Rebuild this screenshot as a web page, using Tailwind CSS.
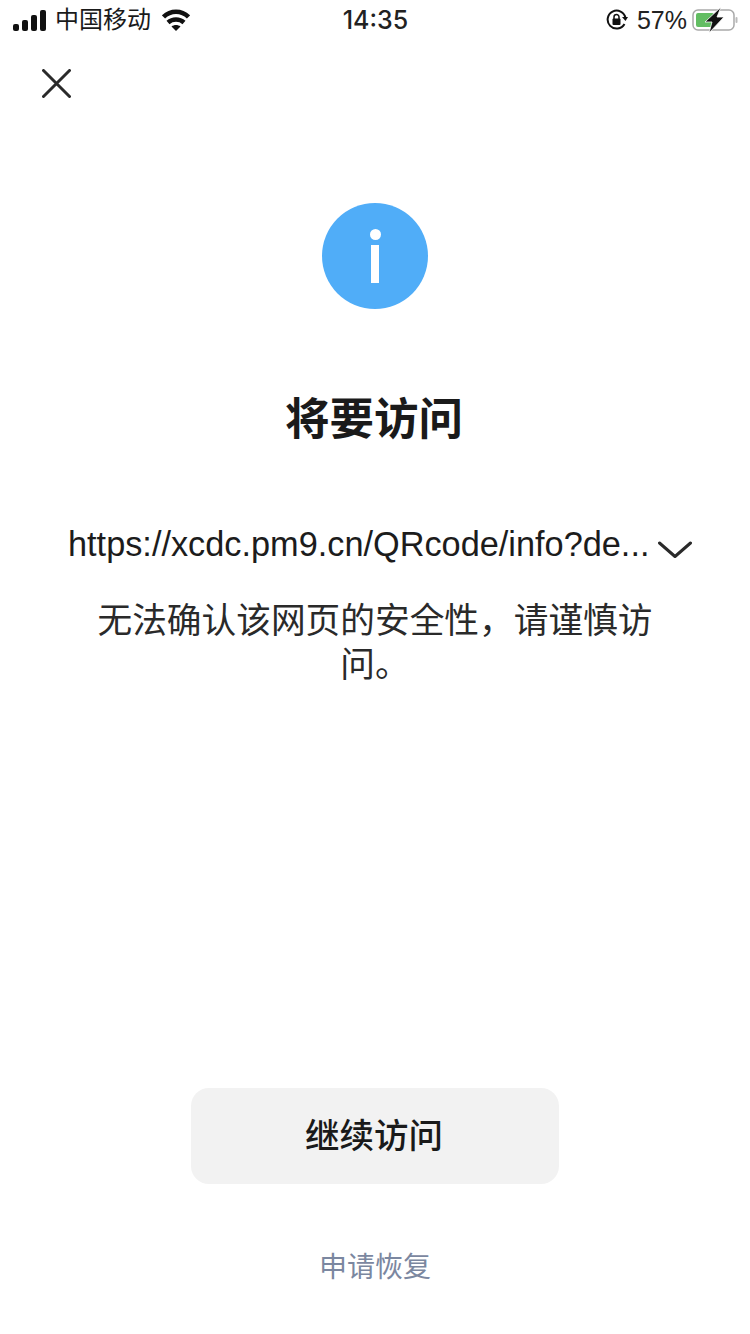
<!doctype html>
<html lang="zh-CN"><head><meta charset="utf-8">
<script src="https://cdn.jsdelivr.net/npm/@tailwindcss/browser@4"></script>
</head>
<body class="bg-white">
<div class="w-[750px] h-[1334px] flex flex-col items-center overflow-hidden text-[#1a1a1a] font-['Liberation_Sans','Noto_Sans_CJK_SC',sans-serif]">
  <div class="w-full h-[40px] shrink-0 grid grid-cols-3 items-center pl-[13px] pr-[12px]">
    <div class="flex items-center">
      <svg width="34" height="21" viewBox="0 0 34 21" fill="#111"><rect x="0" y="14" width="6" height="7" rx="2"/><rect x="9" y="10" width="6" height="11" rx="2"/><rect x="18" y="5" width="6" height="16" rx="2"/><rect x="27" y="0" width="6" height="21" rx="2"/></svg>
      <span class="ml-[8px] text-[24px] leading-none">中国移动</span>
      <svg class="ml-[11px]" width="28" height="22" viewBox="0 0 28 22" fill="none" stroke="#111" stroke-width="4.500"><path d="M1.500 8 C8.500 1 19.500 1 26.500 8"/><path d="M6 13.500 C10.500 9.500 17.500 9.500 22 13.500"/><path d="M14 22 L9.500 17.500 C12 15.500 16 15.500 18.500 17.500 Z" fill="#111" stroke="none"/></svg>
    </div>
    <div class="text-center text-[25px] font-medium leading-none font-['Inter',sans-serif] text-[#222]">14:35</div>
    <div class="flex items-center justify-end">
      <svg width="22" height="22" viewBox="0 0 22 22" fill="none"><path d="M18.500 15 A9 9 0 1 1 19.500 9" stroke="#111" stroke-width="2"/><path d="M16 8 L22 8 L19.500 12 Z" fill="#111"/><rect x="6.500" y="9.500" width="8" height="6.500" rx="1" fill="#111"/><path d="M8 10 V8 A2.500 2.500 0 0 1 13 8 V10" stroke="#111" stroke-width="1.500"/></svg>
      <span class="ml-[9px] text-[25px] leading-none text-[#222]">57%</span>
      <svg class="ml-[5px]" width="46" height="26" viewBox="0 0 46 26" fill="none"><rect x="1" y="3" width="41" height="20" rx="5" stroke="#a9a9a9" stroke-width="1.500"/><rect x="4" y="6" width="18" height="14" rx="2" fill="#62bd62"/><rect x="43.500" y="10" width="2" height="6" rx="1" fill="#bbb"/><path d="M29 0 L13 15 H20 L17 26 L32 10 H25 Z" fill="#111" stroke="#fff" stroke-width="0.800"/></svg>
    </div>
  </div>

  <div class="w-full h-[163px] shrink-0 pl-[42px] pt-[29px]">
    <svg width="29" height="29" viewBox="0 0 29 29" fill="none" stroke="#2a2a2a" stroke-width="3" stroke-linecap="round"><path d="M1.500 1.500 L27.500 27.500 M27.500 1.500 L1.500 27.500"/></svg>
  </div>

  <div class="w-[106px] h-[106px] shrink-0 rounded-full bg-[#50adf8] flex flex-col items-center pt-[26px]">
    <div class="w-[11px] h-[11px] rounded-full bg-white"></div>
    <div class="w-[8px] h-[38px] mt-[5px] bg-white"></div>
  </div>

  <h1 class="mt-[83px] pr-[2px] text-[44.500px] leading-[56px] font-bold text-[#1a1a1a]">将要访问</h1>

  <div class="mt-[70px] w-full pl-[68px] flex items-center h-[52px]">
    <span class="text-[34.300px] leading-[52px] whitespace-nowrap text-[#1c1c1c]">https://xcdc.pm9.cn/QRcode/info?de...</span>
    <svg class="ml-[9px] mt-[12px]" width="34" height="18" viewBox="0 0 34 18" fill="none" stroke="#2a2a2a" stroke-width="3" stroke-linecap="round" stroke-linejoin="round"><path d="M1.500 2 L17 15.500 L32.500 2"/></svg>
  </div>

  <p class="mt-[29px] w-[570px] text-center text-[34.700px] leading-[44px] text-[#2a2a2a]">无法确认该网页的安全性，请谨慎访问。</p>

  <button class="mt-[401px] w-[368px] h-[96px] shrink-0 rounded-[18px] bg-[#f2f2f2] pr-[2px] pt-[2px] text-[34.500px] font-medium text-[#1a1a1a]">继续访问</button>

  <div class="mt-[64px] text-[28px] leading-[40px] text-[#7b87a0]">申请恢复</div>
</div>
</body></html>
